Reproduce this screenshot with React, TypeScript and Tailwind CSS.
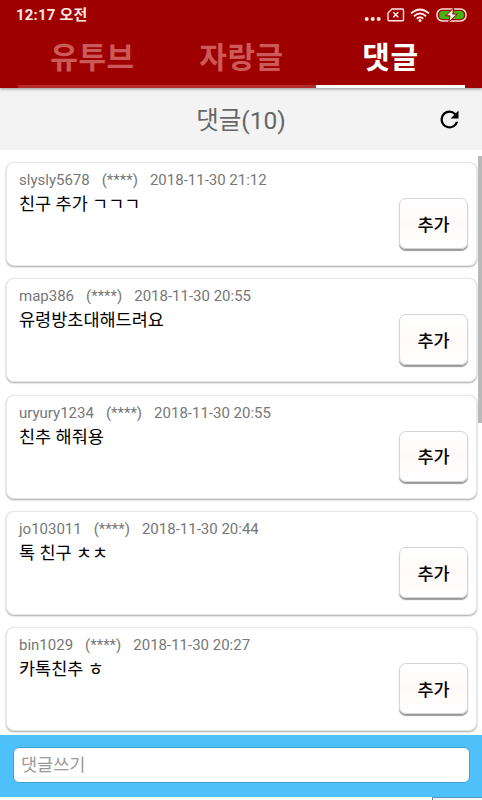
import React from "react";

type Comment = { user: string; date: string; text: string };

const comments: Comment[] = [
  { user: "slysly5678", date: "2018-11-30 21:12", text: "친구 추가 ㄱㄱㄱ" },
  { user: "map386", date: "2018-11-30 20:55", text: "유령방초대해드려요" },
  { user: "uryury1234", date: "2018-11-30 20:55", text: "친추 해줘용" },
  { user: "jo103011", date: "2018-11-30 20:44", text: "톡 친구 ㅊㅊ" },
  { user: "bin1029", date: "2018-11-30 20:27", text: "카톡친추 ㅎ" },
];

const tabs = ["유투브", "자랑글", "댓글"];

function StatusBar() {
  return (
    <div className="flex h-[30px] items-center justify-between pl-4 pr-[15px] text-[#ffe9e6]">
      <span className="text-[15px] font-bold leading-none tracking-[0.2px]">12:17 오전</span>
      <div className="flex items-center">
        <svg width="17" height="16" viewBox="0 0 17 16" fill="currentColor">
          <circle cx="2.7" cy="12" r="2" />
          <circle cx="8.7" cy="12" r="2" />
          <circle cx="14.7" cy="12" r="2" />
        </svg>
        <svg className="ml-[6px]" width="18" height="16" viewBox="0 0 18 16" fill="none" stroke="currentColor" strokeWidth="1.4">
          <path d="M5 2H15.5Q16.5 2 16.5 3V12.7Q16.5 13.7 15.5 13.7H2Q1 13.7 1 12.7V6Z" />
          <path d="M6.3 5.3L11.3 10.3M11.3 5.3L6.3 10.3" strokeWidth="1.6" />
        </svg>
        <svg className="ml-[5px]" width="20" height="16" viewBox="0 0 20 16" fill="none" stroke="currentColor" strokeWidth="1.9">
          <path d="M1 6.4Q10 -1.6 19 6.4" />
          <path d="M4 9.2Q10 3.7 16 9.2" />
          <path d="M6.7 11.8Q10 8.8 13.3 11.8" />
          <circle cx="10" cy="13.6" r="1.5" fill="currentColor" stroke="none" />
        </svg>
        <svg className="ml-[6px]" width="31" height="16" viewBox="0 0 31 16">
          <rect x="1" y="2" width="29" height="12" rx="5.5" fill="#9e0000" stroke="#ffe0da" strokeWidth="1.5" />
          <rect x="3.2" y="4" width="24.6" height="8" rx="3.5" fill="#43b412" />
          <path d="M17.5 1L9.8 8.8H14L12.8 15L21.3 7.1H16.8Z" fill="#fff1ed" stroke="#9e0000" strokeWidth="1" />
        </svg>
      </div>
    </div>
  );
}

function Card({ user, date, text }: Comment) {
  return (
    <article className="flex h-[104px] shrink-0 justify-between rounded-[8px] border border-[#e7e7e7] bg-white pl-3 pr-[8px] shadow-[0_1px_2px_rgba(0,0,0,0.35)]">
      <div className="pt-[8px]">
        <div className="flex gap-[12px] whitespace-nowrap text-[15px] leading-[18px] text-[#777]">
          <span>{user}</span>
          <span>(****)</span>
          <span>{date}</span>
        </div>
        <p className="mt-[2px] text-[17.5px] leading-[26px] text-black">{text}</p>
      </div>
      <button className="mt-[35px] flex h-[51px] w-[69px] items-center justify-center rounded-[7px] border border-[#d5d5d5] bg-linear-to-b from-white via-[#fffaf8] to-white pt-[3px] text-[17.5px] font-medium text-black shadow-[0_2px_1px_#999]">
        추가
      </button>
    </article>
  );
}

export default function App() {
  return (
    <div className="flex h-[800px] w-[482px] flex-col overflow-hidden bg-white font-[Roboto,'Noto_Sans_CJK_KR',sans-serif]">
      <header className="z-10 h-[88px] shrink-0 bg-[#9e0000] shadow-[0_1px_3px_rgba(0,0,0,0.4)]">
        <StatusBar />
        <nav className="ml-[18px] grid h-[58px] w-[447px] grid-cols-3">
          {tabs.map((tab) => (
            <div
              key={tab}
              className={
                tab === "댓글"
                  ? "flex items-center justify-center border-b-[3px] border-white text-[30px] font-bold leading-none tracking-[0.6px] text-white"
                  : "flex items-center justify-center border-b-[3px] border-[#b42d2d] text-[30px] font-bold leading-none tracking-[0.6px] text-[#cd5a5a]"
              }
            >
              {tab}
            </div>
          ))}
        </nav>
      </header>

      <div className="grid h-[62px] shrink-0 grid-cols-[1fr_auto_1fr] items-center bg-[#f3f3f3] pl-[19px] pr-[19px]">
        <h1 className="col-start-2 pt-[4px] text-[24.5px] leading-none text-[#666]">댓글(10)</h1>
        <svg className="justify-self-end" width="27" height="27" viewBox="0 0 24 24" fill="black">
          <path d="M17.65 6.35A7.96 7.96 0 0 0 12 4a8 8 0 1 0 7.73 10h-2.08A6 6 0 1 1 12 6c1.66 0 3.14.69 4.22 1.78L13 11h7V4z" />
        </svg>
      </div>

      <main className="flex h-[585px] shrink-0 justify-between overflow-hidden">
        <div className="ml-[6px] flex w-[471px] flex-col gap-[12.15px] pt-[12.3px]">
          {comments.map((comment) => (
            <Card key={comment.user} {...comment} />
          ))}
        </div>
        <div className="mt-[6px] h-[267px] w-[4px] bg-[#b9b9b9]" />
      </main>

      <footer className="h-[62px] shrink-0 bg-[#4fc1fa] pl-[13px] pr-[12px] pt-[12px]">
        <input
          className="block h-[36px] w-full rounded-[6px] border border-[#3f9fd0] bg-white px-[7px] text-[17.5px] outline-none placeholder:text-[#999]"
          placeholder="댓글쓰기"
        />
      </footer>
      <div className="ml-[432px] h-[3px] w-[50px] border-l border-t border-[#5b94ba] bg-white" />
    </div>
  );
}
